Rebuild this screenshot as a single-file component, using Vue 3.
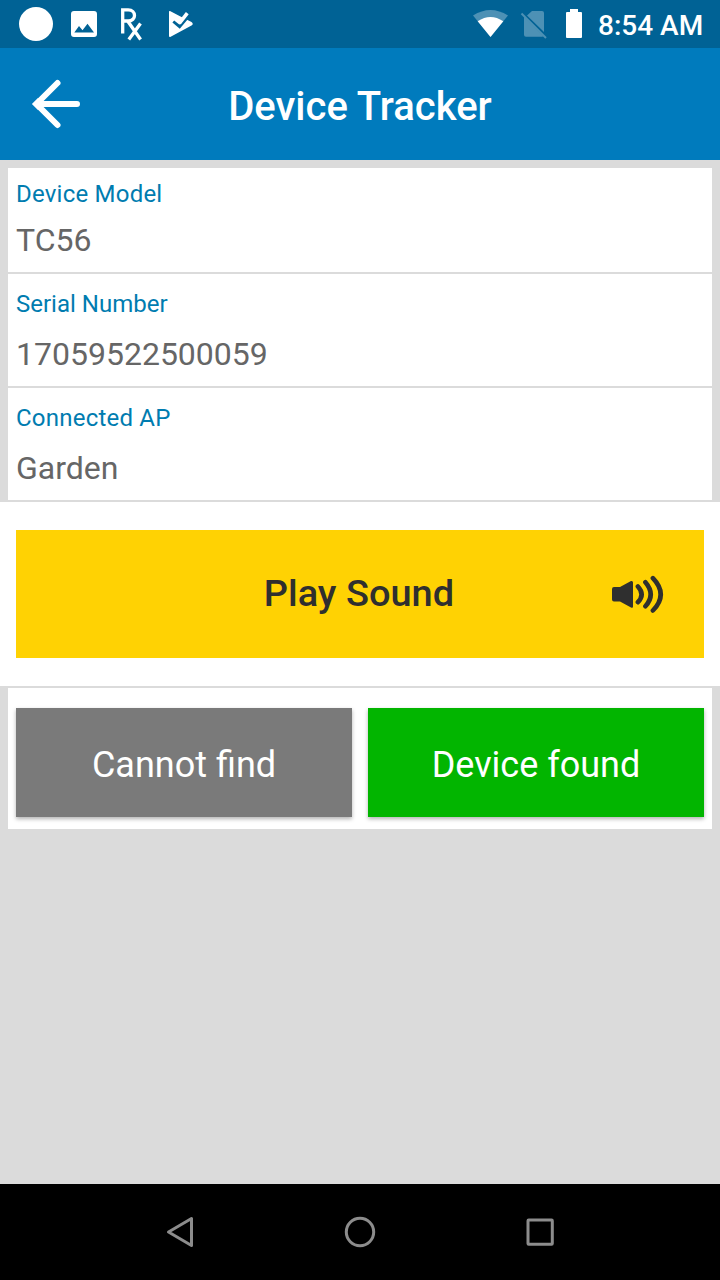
<script setup>
const fields = [
  { label: 'Device Model', value: 'TC56', compact: true, spaced: true },
  { label: 'Serial Number', value: '17059522500059' },
  { label: 'Connected AP', value: 'Garden', spaced: true },
]
</script>

<template>
  <div class="screen">
    <div class="status">
      <svg class="status-left" width="220" height="48" viewBox="0 0 220 48">
        <circle cx="36" cy="24" r="17" fill="#fff" />
        <path fill="#fff" fill-rule="evenodd" d="M74 11H94A3 3 0 0 1 97 14V34A3 3 0 0 1 94 37H74A3 3 0 0 1 71 34V14A3 3 0 0 1 74 11ZM74.300 32.500H94L87.500 23.800L82.500 30.200L79 26Z" />
        <path fill="none" stroke="#fff" stroke-width="3.300" d="M122.700 33.500V9.900H128.200C136.600 9.900 136.600 21 128.200 21H123M127.300 20.500L140.600 39.500M140.500 23.500L128.800 39.500" />
        <path fill="#fff" d="M169 11.500Q169.200 10.700 170 11L180 16.200L191.500 22Q194 24 191.500 25.600L170.200 37Q169 37.200 169 36Z" />
        <path fill="none" stroke="#006295" stroke-width="2.800" d="M173.300 21.500L179.600 26.700L190.300 14" />
        <path fill="none" stroke="#fff" stroke-width="3.600" d="M179.300 23.300L187.300 13.200" />
      </svg>
      <div class="status-right">
        <svg width="130" height="48" viewBox="460 0 130 48">
          <path fill="#4d91b5" d="M473 15.500Q490.500 4.500 508 15.500L490.500 37Z" />
          <path fill="#fff" d="M477.700 21.300Q490.500 12.500 503.300 21.300L490.500 37Z" />
          <path fill="#4d91b5" d="M532 11H542Q544 11 544 13V32L527 15.500ZM524 16.500L543.500 36.200L542 36.800H526Q524 36.800 524 34.800Z" />
          <path stroke="#4d91b5" stroke-width="2" d="M521.500 13.500L546 38" />
          <path fill="#fff" d="M570 9H578V12H581Q582 12 582 13V37Q582 38 581 38H567Q566 38 566 37V13Q566 12 567 12H570Z" />
        </svg>
        <span class="time">8:54 AM</span>
      </div>
    </div>

    <header class="bar">
      <svg class="back" width="56" height="56" viewBox="28 76 56 56">
        <path fill="#fff" d="M32 104L38 98L44 104L38 110Z" />
        <path fill="none" stroke="#fff" stroke-width="6" stroke-linecap="round" stroke-linejoin="miter" d="M57.500 83L36.500 104L57.500 125M37 104H77" />
      </svg>
      <h1>Device Tracker</h1>
    </header>

    <main>
      <section class="fields">
        <div v-for="f in fields" :key="f.label" class="field" :class="{ compact: f.compact }">
          <div class="label" :class="{ spaced: f.spaced }">{{ f.label }}</div>
          <div class="value">{{ f.value }}</div>
        </div>
      </section>

      <section class="sound">
        <button class="play">
          <span>Play Sound</span>
          <svg class="speaker" width="60" height="44" viewBox="608 572 60 44">
            <path fill="#2f2f2f" d="M614 587H620L631 581Q633 580.500 633 582.500V606.500Q633 608.500 631 607.500L620 601.500H614Q612 601.500 612 599.500V589Q612 587 614 587Z" />
            <path fill="none" stroke="#2f2f2f" stroke-width="4.600" stroke-linecap="round" d="M637.900 586.500Q645.300 594.500 637.900 602.200M645.400 582.200Q656 594.500 645.400 606.300M652.900 578.200Q668.500 594.500 652.900 610.500" />
          </svg>
        </button>
      </section>

      <section class="actions">
        <button class="action missing">Cannot find</button>
        <button class="action found">Device found</button>
      </section>
    </main>

    <nav class="nav">
      <svg width="48" height="48" viewBox="156 1208 48 48"><path fill="none" stroke="#8c8c8c" stroke-width="3" stroke-linejoin="round" d="M191.500 1218.500V1245.500L168.500 1232Z" /></svg>
      <svg width="48" height="48" viewBox="336 1208 48 48"><circle cx="360" cy="1232" r="13.700" fill="none" stroke="#8c8c8c" stroke-width="3" /></svg>
      <svg width="48" height="48" viewBox="516 1208 48 48"><rect x="528" y="1220" width="24.300" height="24.300" rx=".7" fill="none" stroke="#8c8c8c" stroke-width="3" /></svg>
    </nav>
  </div>
</template>

<style scoped>
.screen {
  width: 720px;
  height: 1280px;
  display: flex;
  flex-direction: column;
  background: #dbdbdb;
  font-family: Roboto, "Noto Sans", sans-serif;
  overflow: hidden;
}
svg {
  display: block;
}
.status {
  height: 48px;
  flex: none;
  background: #006295;
  display: flex;
  justify-content: space-between;
}
.status-right {
  display: flex;
  width: 260px;
}
.time {
  margin-left: 8px;
  color: #fff;
  font-size: 28px;
  font-weight: 500;
  line-height: 51px;
  white-space: nowrap;
}
.bar {
  height: 112px;
  flex: none;
  background: #007bbd;
  display: grid;
  grid-template-columns: 112px 1fr 112px;
  align-items: center;
}
.back {
  margin-left: 28px;
}
h1 {
  margin: 6px 0 0;
  font-size: 40px;
  line-height: 48px;
  font-weight: 500;
  color: #fff;
  text-align: center;
}
main {
  flex: 1;
}
.fields {
  padding: 8px 8px 0;
}
.field {
  box-sizing: border-box;
  height: 114px;
  padding: 16px 8px 0;
  background: #fff;
  border-bottom: 2px solid #dbdbdb;
}
.field.compact {
  height: 106px;
  padding-top: 12px;
}
.label {
  font-size: 24px;
  line-height: 28px;
  color: #007cb0;
}
.label.spaced {
  letter-spacing: 0.22px;
}
.value {
  margin-top: 17px;
  font-size: 32px;
  line-height: 38px;
  color: #666;
}
.compact .value {
  margin-top: 13px;
}
.sound {
  background: #fff;
  padding: 28px 16px;
  border-bottom: 2px solid #dbdbdb;
}
button {
  border: 0;
  margin: 0;
  padding: 0;
  font-family: inherit;
}
.play {
  width: 100%;
  height: 128px;
  background: #ffd203;
  color: #2f2f2f;
  font-size: 36px;
  font-weight: 500;
  display: grid;
  grid-template-columns: 96px 1fr 96px;
  align-items: center;
}
.play span {
  grid-column: 2;
  padding-right: 2px;
  transform: scaleX(1.055);
}
.actions {
  margin: 0 8px;
  padding: 20px 8px 12px;
  display: flex;
  gap: 16px;
  background: #fff;
}
.action {
  flex: 1;
  height: 109px;
  padding-top: 4px;
  font-size: 36px;
  color: #fff;
  box-shadow: 0 2px 4px rgba(0, 0, 0, 0.3);
}
.missing {
  background: #7a7a7a;
}
.found {
  background: #02b500;
}
.nav {
  height: 96px;
  flex: none;
  background: #000;
  display: flex;
  justify-content: center;
  align-items: center;
  gap: 132px;
}
</style>
